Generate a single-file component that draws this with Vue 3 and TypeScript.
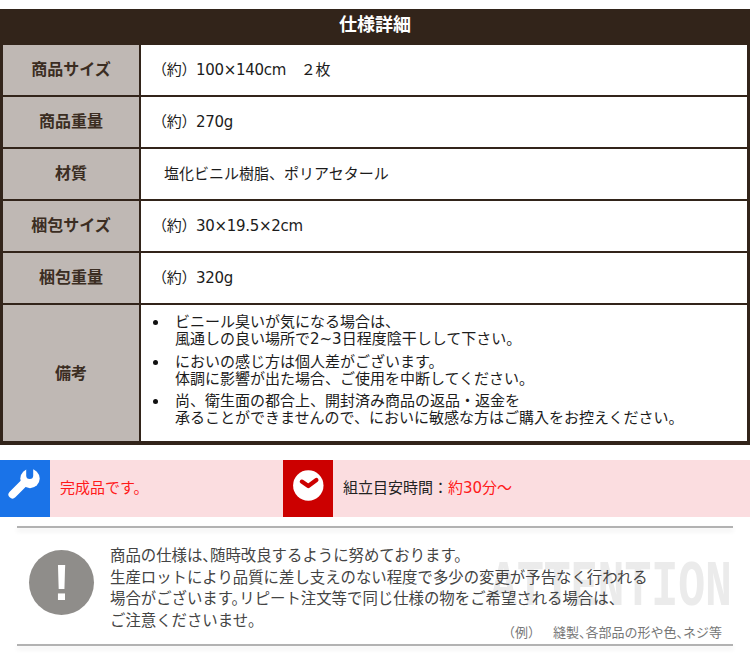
<script setup lang="ts">
interface Row { label: string; text: string; cls?: string }
const rows: Row[] = [
  { label: '商品サイズ', text: '（約）100×140cm　２枚' },
  { label: '商品重量', text: '（約）270g' },
  { label: '材質', text: '塩化ビニル樹脂、ポリアセタール', cls: 'shift' },
  { label: '梱包サイズ', text: '（約）30×19.5×2cm' },
  { label: '梱包重量', text: '（約）320g' },
]
const notes: string[][] = [
  ['ビニール臭いが気になる場合は、', '風通しの良い場所で2~3日程度陰干しして下さい。'],
  ['においの感じ方は個人差がございます。', '体調に影響が出た場合、ご使用を中断してください。'],
  ['尚、衛生面の都合上、開封済み商品の返品・返金を', '承ることができませんので、においに敏感な方はご購入をお控えください。'],
]
const lines: string[] = [
  '商品の仕様は、随時改良するように努めております。',
  '生産ロットにより品質に差し支えのない程度で多少の変更が予告なく行われる',
  '場合がございます。リピート注文等で同じ仕様の物をご希望される場合は、',
  'ご注意くださいませ。',
]
</script>

<template>
  <div class="page">
    <section class="spec">
      <h2 class="title">仕様詳細</h2>
      <div class="grid">
        <template v-for="r in rows" :key="r.label">
          <div class="label">{{ r.label }}</div>
          <div class="value" :class="r.cls">{{ r.text }}</div>
        </template>
        <div class="label last">備考</div>
        <div class="value notes">
          <ul>
            <li v-for="n in notes" :key="n[0]">
              <span v-for="l in n" :key="l" class="line">{{ l }}</span>
            </li>
          </ul>
        </div>
      </div>
    </section>

    <section class="info">
      <div class="cell first">
        <div class="icon blue">
          <svg width="50" height="57" viewBox="0 0 50 57">
            <path d="M12.5 34.5 L24.5 22.5" stroke="#fff" stroke-width="8" stroke-linecap="round" fill="none" />
            <circle cx="30" cy="18.5" r="9.7" fill="#fff" />
            <path d="M26.2 8 V15.5 A3.5 3.5 0 0 0 33.2 15.5 V8 Z" fill="#1a73e8" />
          </svg>
        </div>
        <p class="red">完成品です。</p>
      </div>
      <div class="cell">
        <div class="icon crimson">
          <svg width="50" height="57" viewBox="0 0 50 57">
            <circle cx="25.3" cy="25.5" r="15.2" fill="#fff" />
            <path d="M18.8 21.6 L25.3 26 L33.4 20" fill="none" stroke="#cc0000" stroke-width="4.2" stroke-linecap="round" stroke-linejoin="round" />
          </svg>
        </div>
        <p class="dark">組立目安時間：<span class="red">約30分～</span></p>
      </div>
    </section>

    <section class="attention">
      <div class="rule"></div>
      <div class="body">
        <div class="mark"><span>!</span></div>
        <div class="copy">
          <p v-for="l in lines" :key="l">{{ l }}</p>
        </div>
        <span class="water">ATTENTION</span>
        <span class="example"><span class="eg">（例）</span><span class="eg-gap">縫製、各部品の形や色、ネジ等</span></span>
      </div>
      <div class="rule"></div>
    </section>
  </div>
</template>

<style scoped>
.page {
  width: 750px;
  height: 667px;
  padding-top: 9px;
  box-sizing: border-box;
  overflow: hidden;
  background: #fff;
  font-family: "DejaVu Sans", "Noto Sans CJK JP", sans-serif;
  color: #333;
}
.spec {
  background: #32241a;
  padding: 0 3px 4px;
}
.title {
  margin: 0;
  height: 36px;
  line-height: 31px;
  text-align: center;
  color: #fff;
  font-size: 18px;
  font-weight: 700;
}
.grid {
  display: grid;
  grid-template-columns: 136px 1fr;
  grid-template-rows: repeat(5, 50px) 136px;
  gap: 2px;
}
.label {
  background: #bfb8b4;
  display: flex;
  align-items: center;
  justify-content: center;
  padding-bottom: 4px;
  font-size: 16px;
  font-weight: 700;
  color: #3b2d22;
}
.label.last {
  padding-bottom: 2px;
}
.value {
  background: #fff;
  display: flex;
  align-items: center;
  padding-left: 11px;
  padding-bottom: 4px;
  font-size: 15px;
  letter-spacing: -0.3px;
  color: #1c1c1c;
}
.value.shift {
  padding-left: 23px;
  letter-spacing: 0;
}
.notes {
  padding-left: 0;
  padding-bottom: 0;
  letter-spacing: 0;
  align-items: flex-start;
}
.notes ul {
  margin: 0;
  padding: 9px 0 0 34px;
  list-style: none;
}
.notes li {
  position: relative;
  margin-bottom: 5.5px;
  line-height: 17px;
  font-size: 15px;
}
.notes li::before {
  content: "";
  position: absolute;
  left: -22px;
  top: 6px;
  width: 5px;
  height: 5px;
  border-radius: 50%;
  background: #111;
}
.line {
  display: block;
  white-space: nowrap;
}
.info {
  display: flex;
  height: 57px;
  margin-top: 15px;
  background: #fbdde0;
}
.cell {
  display: flex;
  align-items: center;
  flex: 0 0 283px;
}
.icon {
  width: 50px;
  height: 57px;
  flex: none;
}
.icon svg {
  display: block;
}
.blue {
  background: #1a73e8;
}
.crimson {
  background: #cc0000;
}
.cell p {
  margin: 0 0 5px 10px;
  font-size: 15px;
  white-space: nowrap;
}
.red {
  color: #ff1a1a;
}
.dark {
  color: #222;
}
.attention {
  margin: 9px 17px 0;
  width: 716px;
}
.rule {
  height: 2px;
  background: #b2b2b2;
  box-shadow: 0 3px 5px rgba(0, 0, 0, 0.1);
}
.body {
  position: relative;
  height: 116px;
  display: flex;
}
.mark {
  margin: 22px 0 0 12px;
  width: 65px;
  height: 65px;
  border-radius: 50%;
  background: #8f8d8a;
  color: #fff;
  display: flex;
  align-items: center;
  justify-content: center;
  font-size: 50px;
  font-weight: 700;
  flex: none;
  font-family: "Liberation Sans", sans-serif;
}
.copy {
  position: relative;
  z-index: 1;
  margin: 18px 0 0 16px;
  font-size: 15.4px;
  line-height: 21.6px;
  color: #444;
  font-feature-settings: "halt";
}
.copy p {
  margin: 0;
  white-space: nowrap;
}
.water {
  position: absolute;
  left: 473px;
  top: 28px;
  font-family: "Liberation Mono", monospace;
  font-weight: 700;
  font-size: 64px;
  line-height: 64px;
  color: #ebebeb;
  transform: scaleX(0.7);
  transform-origin: left top;
  white-space: nowrap;
}
.example {
  position: absolute;
  right: 11px;
  bottom: 3px;
  z-index: 1;
  font-size: 13px;
  color: #777;
  white-space: nowrap;
}
.eg-gap {
  margin-left: 12px;
  font-feature-settings: "halt";
}
</style>
